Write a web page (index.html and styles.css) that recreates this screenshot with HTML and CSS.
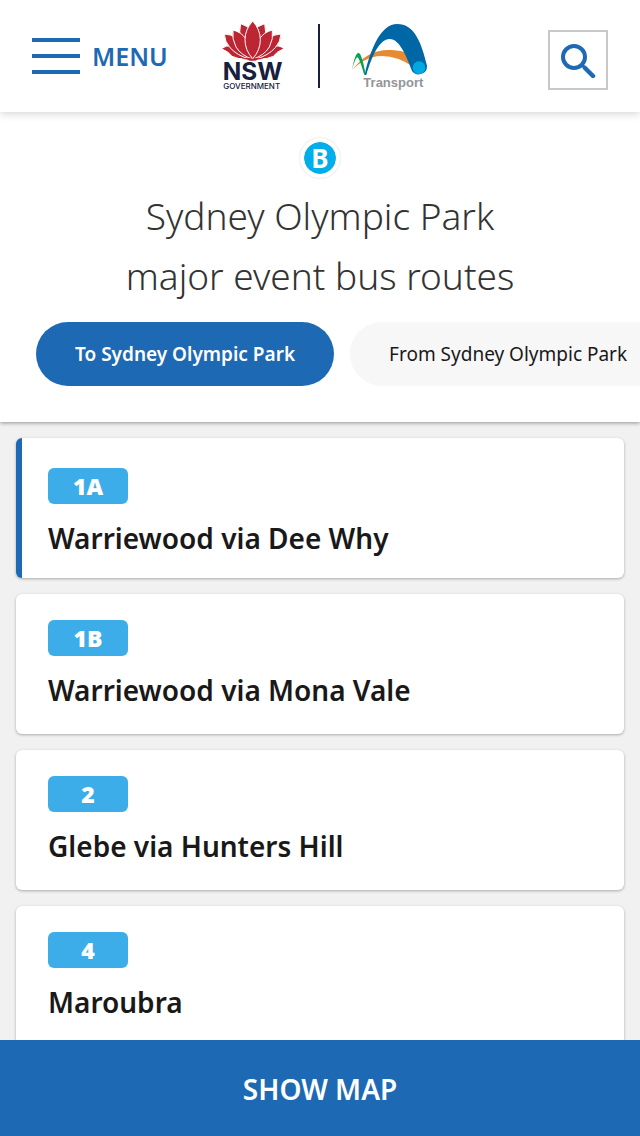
FILE: index.html
```html
<!DOCTYPE html>
<html lang="en">
<head>
<meta charset="utf-8">
<meta name="viewport" content="width=device-width, initial-scale=1">
<title>Sydney Olympic Park major event bus routes</title>
<link rel="stylesheet" href="styles.css">
</head>
<body>
<header class="header">
  <button class="menu" type="button">
    <span class="menu-bars"><span></span><span></span><span></span></span>
    MENU
  </button>
  <a class="brand" href="#" aria-label="NSW Government, Transport">
    <svg class="logo-nsw" viewBox="36 30 192 210" role="img" aria-label="NSW Government">
      <g fill="#be2532" stroke="#fff" stroke-width="3" stroke-linejoin="round">
        <path d="M34 113Q48 101 68 106Q92 120 114 144Q84 146 66 136Q56 122 34 113Z"/>
        <path d="M222 113Q208 101 188 106Q164 120 142 144Q172 146 190 136Q200 122 222 113Z"/>
        <path d="M43 69Q63 70 77 80Q84 106 116 143Q82 134 60 110Q44 92 43 69Z"/>
        <path d="M213 69Q193 70 179 80Q172 106 140 143Q174 134 196 110Q212 92 213 69Z"/>
        <path d="M92 38Q114 44 124 60L132 60Q142 44 164 38Q170 60 163 86L142 130L128 143L114 130L93 86Q86 60 92 38Z"/>
        <path d="M69 57Q95 64 107 83Q124 108 127 144Q94 134 78 108Q65 84 69 57Z"/>
        <path d="M187 57Q161 64 149 83Q132 108 129 144Q162 134 178 108Q191 84 187 57Z"/>
        <path d="M128 30Q151 56 151 86Q151 118 128 143Q105 118 105 86Q105 56 128 30Z"/>
      </g>
      <path d="M94 144Q112 137 128 143Q144 137 161 144Q143 143 136 149H119Q112 143 94 144Z" fill="#be2532"/>
      <text class="nsw-name" x="128" y="207" text-anchor="middle">NSW</text>
      <text class="nsw-sub" x="125" y="235" text-anchor="middle">GOVERNMENT</text>
    </svg>
    <span class="brand-rule"></span>
    <svg class="logo-transport" viewBox="36 33 228 210" role="img" aria-label="Transport">
      <path d="M37 180Q82 116 155 120Q182 121 207 130L222 172Q165 132 110 139Q69 146 37 180Z" fill="#e88a32"/>
      <path d="M36 179Q46 125 57 129Q65 133 75 183L76 195L72 193Q58 143 52 142Q46 143 36 179Z" fill="#00a54f"/>
      <path d="M74 195C92 112 125 42 171 42C224 42 244 98 261 167A25 25 0 0 1 216 183C202 145 180 87 149 87C118 87 95 140 79 195Z" fill="#0067a6"/>
      <circle cx="237" cy="173" r="19" fill="#00a8e1"/>
      <text class="transport-name" x="160" y="230" text-anchor="middle">Transport</text>
    </svg>
  </a>
  <button class="search" type="button" aria-label="Search">
    <svg viewBox="0 0 36 36" fill="none" stroke="#1e69b4">
      <circle cx="14" cy="15" r="11" stroke-width="4"/>
      <path d="M22 23L25 26" stroke-width="3"/>
      <path d="M25 26L33 34" stroke-width="4.5" stroke-linecap="round"/>
    </svg>
  </button>
</header>

<section class="hero">
  <span class="mode">B</span>
  <h1 class="title">Sydney Olympic Park<br>major event bus routes</h1>
  <div class="chips">
    <button class="chip chip-active" type="button" aria-pressed="true">To Sydney Olympic Park</button>
    <button class="chip" type="button" aria-pressed="false">From Sydney Olympic Park</button>
  </div>
</section>

<main class="routes">
  <a class="route route-active" href="#"><span class="badge">1A</span><span class="route-name">Warriewood via Dee Why</span></a>
  <a class="route" href="#"><span class="badge">1B</span><span class="route-name">Warriewood via Mona Vale</span></a>
  <a class="route" href="#"><span class="badge">2</span><span class="route-name">Glebe via Hunters Hill</span></a>
  <a class="route" href="#"><span class="badge">4</span><span class="route-name">Maroubra</span></a>
</main>

<button class="show-map" type="button">SHOW MAP</button>
</body>
</html>
```
FILE: styles.css
```css
* {
  box-sizing: border-box;
}

body {
  margin: 0;
  height: 100vh;
  display: flex;
  flex-direction: column;
  background: #f1f1f1;
  color: #19191a;
  font-family: "Noto Sans", "Open Sans", sans-serif;
}

button {
  border: 0;
  padding: 0;
  background: none;
  font: inherit;
  color: inherit;
  cursor: pointer;
}

a {
  color: inherit;
  text-decoration: none;
}

.header {
  flex: none;
  z-index: 2;
  display: flex;
  align-items: center;
  height: 112px;
  padding: 0 32px;
  background: #fff;
  box-shadow: 0 2px 8px rgba(0, 0, 0, 0.16);
}

.menu {
  display: flex;
  align-items: center;
  gap: 12px;
  color: #1e69b4;
  font-size: 25px;
  font-weight: 600;
}

.menu-bars {
  display: grid;
  gap: 12px;
}

.menu-bars span {
  width: 48px;
  height: 4px;
  background: #1e69b4;
}

.brand {
  display: flex;
  align-items: center;
  gap: 32px;
  margin: 0 auto 0 54px;
}

.logo-nsw {
  width: 64px;
  height: 70px;
}

.logo-transport {
  width: 76px;
  height: 70px;
}

.brand-rule {
  width: 2px;
  height: 64px;
  background: #17203d;
}

.nsw-name {
  fill: #17203d;
  font-family: Inter, sans-serif;
  font-size: 73px;
  font-weight: 700;
}

.nsw-sub {
  fill: #17203d;
  font-family: Inter, sans-serif;
  font-size: 24px;
  font-weight: 500;
}

.transport-name {
  fill: #939598;
  font-family: "Liberation Sans", sans-serif;
  font-size: 39px;
  font-weight: 700;
}

.search {
  display: grid;
  place-items: center;
  width: 60px;
  height: 60px;
  margin-top: 8px;
  border: 2px solid #c8c8c8;
}

.search svg {
  width: 36px;
  height: 36px;
}

.hero {
  flex: none;
  z-index: 1;
  display: flex;
  flex-direction: column;
  align-items: center;
  padding: 26px 0 36px;
  background: #fff;
  box-shadow: 0 1px 4px rgba(0, 0, 0, 0.4);
}

.mode {
  display: grid;
  place-items: center;
  width: 40px;
  height: 40px;
  border: 4px solid #fff;
  border-radius: 50%;
  background: #00aeea;
  background-clip: padding-box;
  box-shadow: 0 0 2px #ccc;
  color: #fff;
  font-size: 26px;
  font-weight: 700;
  line-height: 32px;
}

.title {
  margin: 8px 0 16px;
  color: #333;
  font-size: 37px;
  font-weight: 340;
  line-height: 60px;
  text-align: center;
}

.chips {
  display: flex;
  gap: 16px;
  width: 100%;
  padding: 0 36px;
  overflow-x: auto;
  scrollbar-width: none;
}

.chip {
  flex: none;
  height: 64px;
  padding: 0 39px;
  border-radius: 32px;
  background: #f7f7f7;
  font-size: 19px;
  white-space: nowrap;
}

.chip-active {
  background: #1e69b4;
  color: #fff;
  font-weight: 600;
}

.routes {
  flex: 1;
  min-height: 0;
  display: flex;
  flex-direction: column;
  gap: 16px;
  padding: 16px;
  overflow-y: auto;
  scrollbar-width: none;
}

.route {
  flex: none;
  display: flex;
  flex-direction: column;
  align-items: flex-start;
  gap: 16px;
  padding: 26px 32px;
  border-radius: 6px;
  background: #fff;
  box-shadow: 0 1px 3px rgba(0, 0, 0, 0.3);
}

.route-active {
  padding: 30px 32px 22px 26px;
  border-left: 6px solid #1e69b4;
}

.badge {
  width: 80px;
  border-radius: 6px;
  background: #3cade9;
  color: #fff;
  font-size: 23px;
  font-weight: 900;
  line-height: 36px;
  text-align: center;
}

.route-name {
  font-size: 28px;
  font-weight: 600;
  line-height: 36px;
}

.show-map {
  flex: none;
  z-index: 2;
  height: 96px;
  padding-top: 2px;
  background: #1e69b4;
  color: #fff;
  font-size: 28px;
  font-weight: 600;
}
```
